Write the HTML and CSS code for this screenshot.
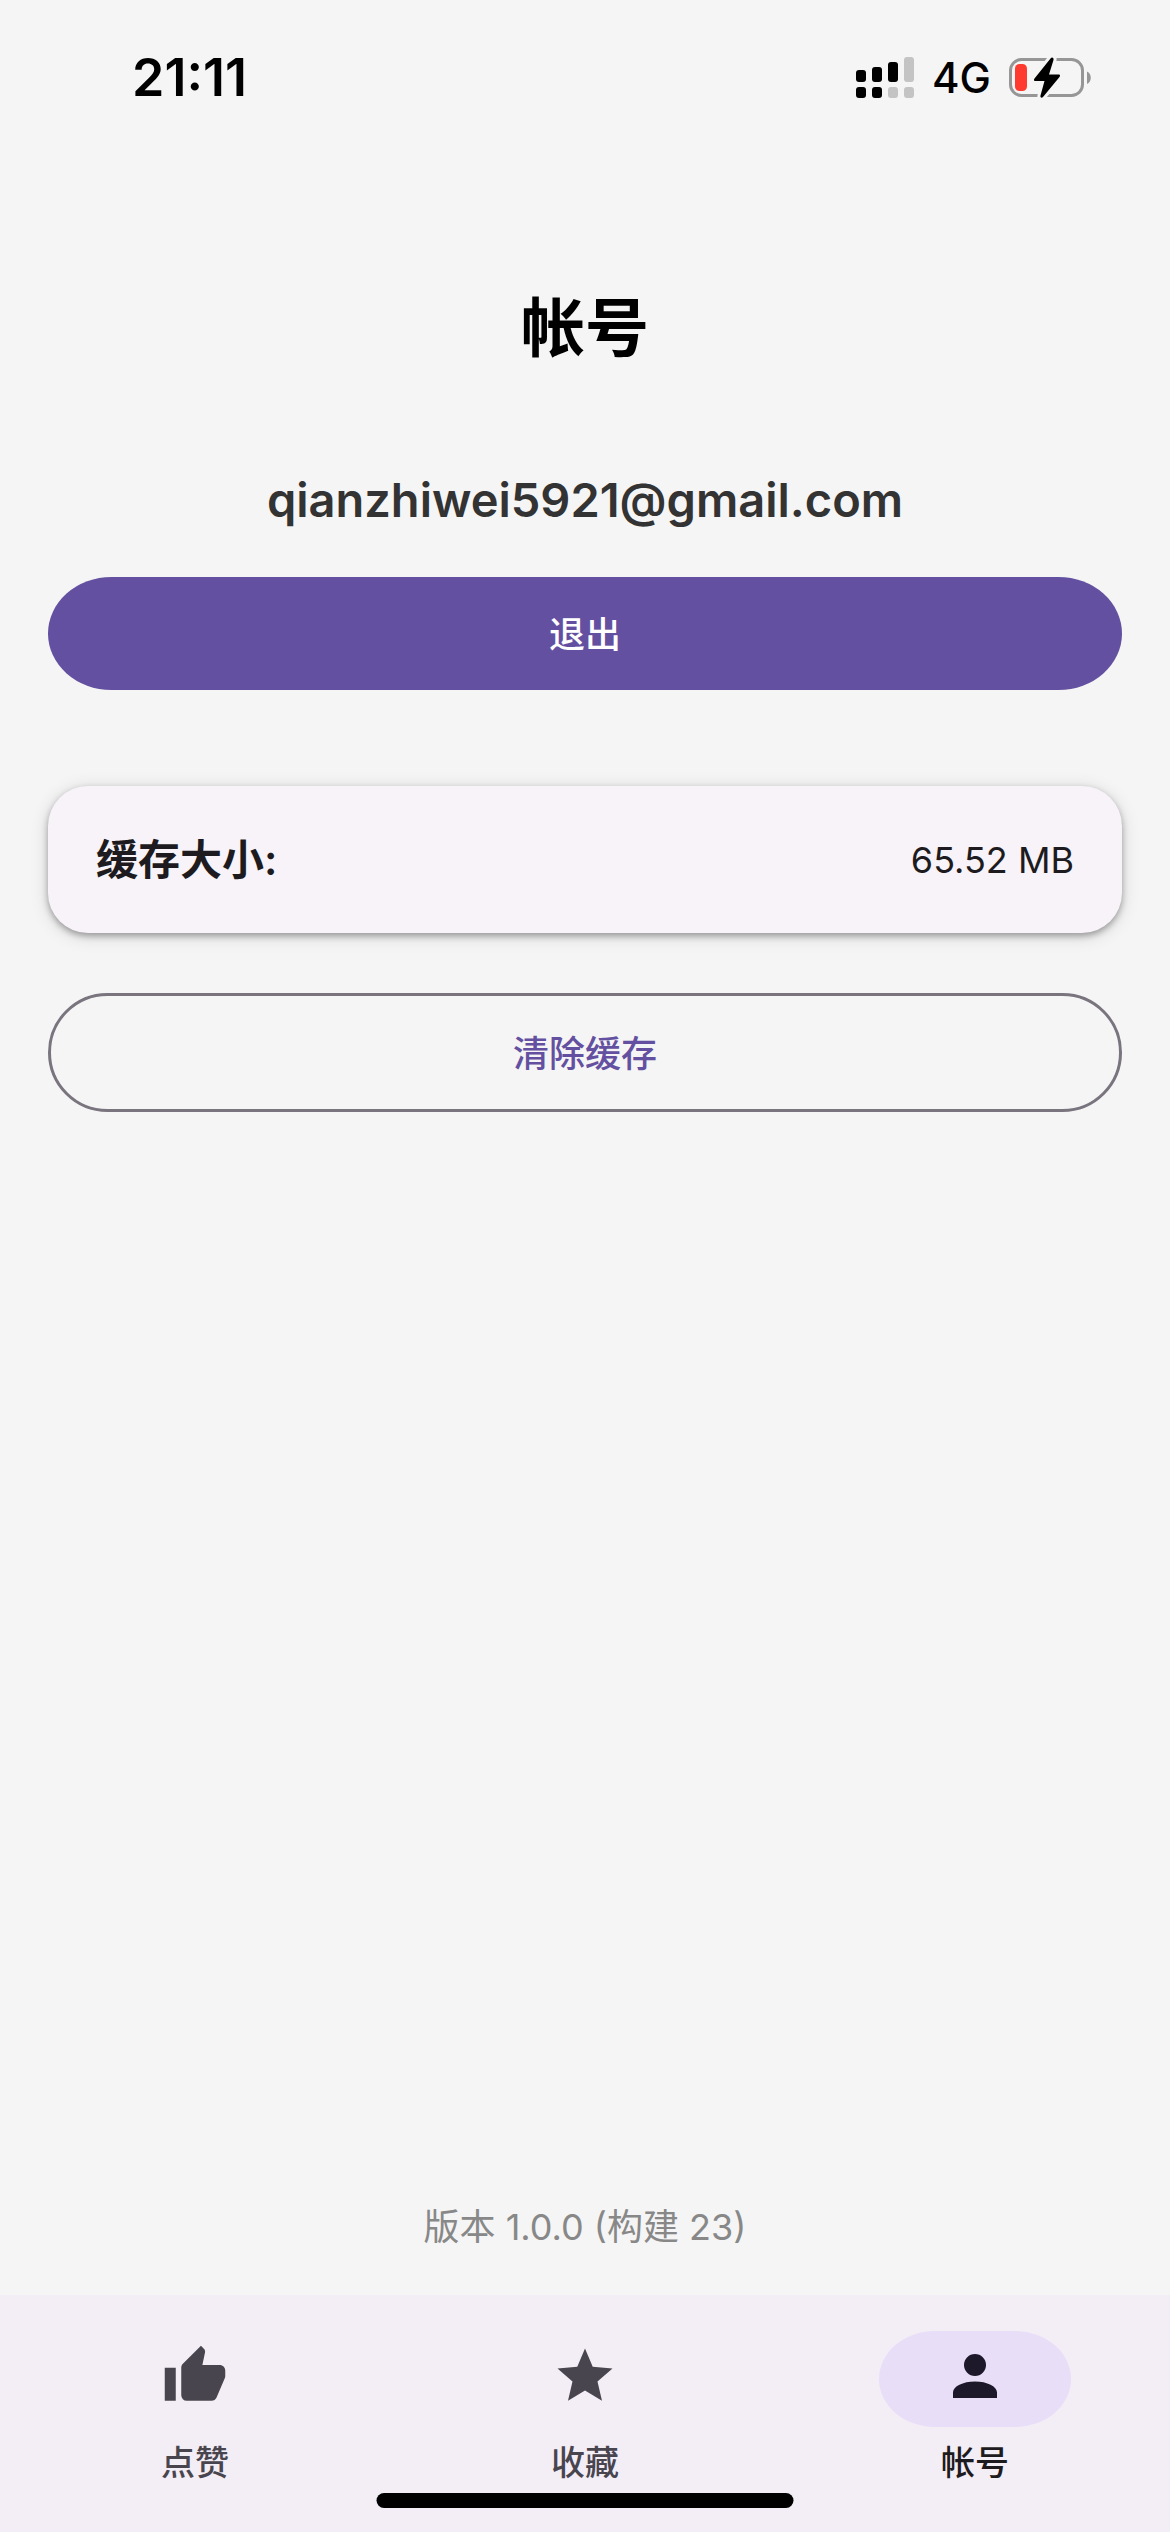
FILE: index.html
```html
<!DOCTYPE html>
<html lang="zh-CN">
<head>
  <meta charset="utf-8">
  <meta name="viewport" content="width=device-width, initial-scale=1">
  <title>帐号</title>
  <link rel="stylesheet" href="styles.css">
</head>
<body class="app">
  <header class="status-bar">
    <time class="status-time">21:11</time>
    <div class="status-icons">
      <svg class="signal-icon" viewBox="0 0 58 42" aria-hidden="true">
        <g fill="#000">
          <rect x="0" y="13" width="10" height="12" rx="3"/>
          <rect x="16" y="10" width="10" height="15" rx="3"/>
          <rect x="32" y="5" width="10" height="20" rx="3"/>
          <rect x="0" y="30" width="10" height="11" rx="3"/>
          <rect x="16" y="30" width="10" height="11" rx="3"/>
        </g>
        <g fill="#c4c4c4">
          <rect x="48" y="0" width="10" height="25" rx="3"/>
          <rect x="32" y="30" width="10" height="11" rx="3"/>
          <rect x="48" y="30" width="10" height="11" rx="3"/>
        </g>
      </svg>
      <span class="network">4G</span>
      <svg class="battery-icon" viewBox="0 0 84 42" aria-hidden="true">
        <rect x="1.500" y="2.500" width="72" height="36" rx="11" fill="none" stroke="#969696" stroke-width="3"/>
        <path d="M78 14.500c5 2 5 10.500 0 12.500z" fill="#969696"/>
        <rect x="6" y="7" width="12" height="27" rx="4.500" fill="#ff3b30"/>
        <path d="M41.500 1.500 25.500 21.500c-1 1.500-.5 2.500 1 2.500h9L31.500 38.500c-.5 2 1 3 2.500 1.500L50.500 20c1-1.500.5-2.500-1-2.500h-9.500L44.500 3c.5-2-1.500-3.500-3-1.500z" fill="#000" stroke="#f5f5f5" stroke-width="6" paint-order="stroke"/>
      </svg>
    </div>
  </header>

  <main class="content">
    <h1 class="title">帐号</h1>
    <p class="email">qianzhiwei5921@gmail.com</p>
    <button class="button button-filled" type="button">退出</button>
    <dl class="card">
      <dt class="card-label">缓存大小:</dt>
      <dd class="card-value">65.52 MB</dd>
    </dl>
    <button class="button button-outlined" type="button">清除缓存</button>
    <p class="version">版本 1.0.0 (构建 23)</p>
  </main>

  <nav class="tabs">
    <a class="tab" href="#likes">
      <span class="tab-icon">
        <svg viewBox="0 0 24 24" aria-hidden="true"><path d="M23 10C23 8.890 22.100 8 21 8H14.680L15.640 3.430C15.660 3.330 15.670 3.220 15.670 3.110C15.670 2.700 15.500 2.320 15.230 2.050L14.170 1L7.590 7.580C7.220 7.950 7 8.450 7 9V19A2 2 0 0 0 9 21H18C18.830 21 19.540 20.500 19.840 19.780L22.860 12.730C22.950 12.500 23 12.260 23 12V10M1 21H5V9H1V21Z"/></svg>
      </span>
      <span class="tab-label">点赞</span>
    </a>
    <a class="tab" href="#favorites">
      <span class="tab-icon">
        <svg viewBox="0 0 24 24" aria-hidden="true"><path d="M12 17.270L18.180 21L16.540 13.970L22 9.240L14.810 8.620L12 2L9.190 8.620L2 9.240L7.450 13.970L5.820 21L12 17.270Z"/></svg>
      </span>
      <span class="tab-label">收藏</span>
    </a>
    <a class="tab tab-active" href="#account" aria-current="page">
      <span class="tab-icon">
        <svg viewBox="0 0 24 24" aria-hidden="true"><path d="M12 4A4 4 0 0 1 16 8A4 4 0 0 1 12 12A4 4 0 0 1 8 8A4 4 0 0 1 12 4M12 14C16.420 14 20 15.790 20 18V20H4V18C4 15.790 7.580 14 12 14Z"/></svg>
      </span>
      <span class="tab-label">帐号</span>
    </a>
    <div class="home-indicator"></div>
  </nav>
</body>
</html>
```

FILE: styles.css
```css
*,
*::before,
*::after {
  box-sizing: border-box;
}

.app {
  display: flex;
  flex-direction: column;
  min-height: 100vh;
  margin: 0;
  background: #f5f5f5;
  color: #1d1b20;
  font-family: Inter, "Noto Sans CJK SC", sans-serif;
  font-size: 36px;
  line-height: 48px;
}

/* Status bar */
.status-bar {
  display: flex;
  align-items: center;
  justify-content: space-between;
  height: 156px;
  padding: 0 77px 0 132px;
  color: #000;
}

.status-time {
  font-size: 52px;
  font-weight: 600;
}

.status-icons {
  display: flex;
  align-items: center;
  gap: 18px;
}

.network {
  font-size: 42px;
  font-weight: 500;
}

.signal-icon {
  width: 58px;
  height: 42px;
}

.battery-icon {
  width: 84px;
  height: 42px;
}

/* Account screen */
.content {
  display: flex;
  flex: 1;
  flex-direction: column;
  padding: 132px 48px 44px;
}

.title {
  margin: 0 0 102px;
  color: #000;
  font-size: 64px;
  font-weight: 700;
  line-height: 80px;
  text-align: center;
}

.email {
  margin: 0 0 47px;
  color: #333;
  font-size: 47px;
  font-weight: 600;
  line-height: 60px;
  text-align: center;
}

.button {
  padding: 2px 0 0;
  border: 0;
  font: inherit;
  font-weight: 500;
  cursor: pointer;
}

.button-filled {
  height: 113px;
  border-radius: 64px / 57px;
  background: #6450a0;
  color: #fff;
}

.button-outlined {
  height: 119px;
  border: 3px solid #79747e;
  border-radius: 60px;
  background: transparent;
  color: #6450a0;
}

.card {
  display: flex;
  align-items: center;
  justify-content: space-between;
  height: 147px;
  margin: 96px 0 60px;
  padding: 0 48px;
  border-radius: 40px;
  background: #f7f3f9;
  box-shadow: 0 3px 6px rgba(0, 0, 0, 0.3), 0 3px 18px rgba(0, 0, 0, 0.15);
}

.card-label {
  font-size: 42px;
  font-weight: 600;
}

.card-value {
  margin: 0;
}

.version {
  margin: auto 0 0;
  color: #888;
  text-align: center;
}

/* Bottom navigation */
.tabs {
  position: relative;
  display: grid;
  grid-template-columns: repeat(3, 1fr);
  height: 237px;
  padding-top: 36px;
  background: #f3edf6;
}

.tab {
  display: flex;
  flex-direction: column;
  align-items: center;
  gap: 14px;
  color: #49454f;
  font-size: 34px;
  font-weight: 500;
  line-height: 44px;
  text-decoration: none;
}

.tab-icon {
  display: flex;
  align-items: center;
  justify-content: center;
  width: 192px;
  height: 96px;
  padding-bottom: 6px;
  border-radius: 56px / 48px;
}

.tab-icon svg {
  width: 66px;
  height: 66px;
  fill: currentColor;
}

.tab-active {
  color: #1d1b20;
}

.tab-active .tab-icon {
  background: #e8def8;
  color: #1d192b;
}

.home-indicator {
  position: absolute;
  bottom: 24px;
  left: 50%;
  width: 417px;
  height: 15px;
  border-radius: 8px;
  background: #000;
  transform: translateX(-50%);
}
```
